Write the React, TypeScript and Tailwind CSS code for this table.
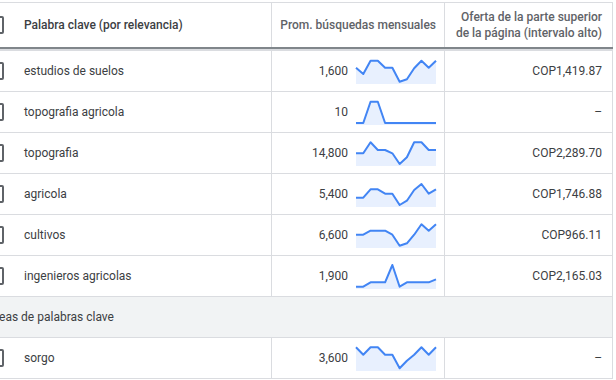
import React from "react";

type Row = { kw: string; vol: string; bid: string; spark: number[] };

const rows: Row[] = [
  { kw: "estudios de suelos", vol: "1,600", bid: "COP1,419.87", spark: [16.7, 23, 9.7, 9.7, 16.7, 16.7, 30.7, 28.3, 17.3, 9.7, 16.7, 9.7] },
  { kw: "topografia agricola", vol: "10", bid: "–", spark: [31, 31, 9.7, 9.7, 31, 31, 31, 31, 31, 31, 31, 31] },
  { kw: "topografia", vol: "14,800", bid: "COP2,289.70", spark: [20.3, 20.3, 9.3, 17, 17, 20.3, 31, 24.3, 9.3, 9.3, 17, 17] },
  { kw: "agricola", vol: "5,400", bid: "COP1,746.88", spark: [23.7, 23.7, 15.3, 15.3, 19.7, 19.7, 31, 26.7, 16, 10, 19.7, 15.3] },
  { kw: "cultivos", vol: "6,600", bid: "COP966.11", spark: [19.7, 19.7, 15.7, 15.7, 15.7, 19.7, 30.7, 28.3, 19.7, 9.3, 15.7, 9.3] },
  { kw: "ingenieros agricolas", vol: "1,900", bid: "COP2,165.03", spark: [30.7, 30.7, 26.3, 26.3, 26.3, 9, 30.7, 26.3, 26.3, 26.3, 26.3, 23.3] },
];

const sorgo: Row = { kw: "sorgo", vol: "3,600", bid: "–", spark: [9.3, 16.7, 9.3, 9.3, 16.7, 16.7, 30.3, 22.7, 16.7, 9.3, 16.7, 9.3] };

function Spark({ data }: { data: number[] }) {
  const step = 80 / (data.length - 1);
  const pts = data.map((v, i) => [i * step, v - 6] as const);
  const line = pts.map(([x, y]) => `${x.toFixed(2)},${y.toFixed(2)}`).join(" ");
  const area = `0,27 ${line} 80,27`;
  return (
    <svg width="80" height="28" viewBox="0 0 80 28" className="shrink-0 overflow-visible">
      <polygon points={area} fill="#e8f0fe" />
      <polyline points={line} fill="none" stroke="#4285f4" strokeWidth="2" strokeLinejoin="round" />
    </svg>
  );
}

function Checkbox() {
  return <div className="h-[18px] w-[18px] shrink-0 rounded-[2px] border-2 border-[#5f6368] bg-white" />;
}

function DataRow({ r }: { r: Row }) {
  return (
    <div className="grid h-[41px] grid-cols-[292px_173px_168px] border-b border-[#dadce0]">
      <div className="flex items-center gap-[20px] border-r border-[#dadce0] pl-[6px]">
        <Checkbox />
        <span>{r.kw}</span>
      </div>
      <div className="flex items-center justify-end gap-[8px] border-r border-[#dadce0] pr-[8px]">
        <span>{r.vol}</span>
        <Spark data={r.spark} />
      </div>
      <div className="flex items-center justify-end border-r border-[#dadce0] pr-[10px]">
        <span>{r.bid}</span>
      </div>
    </div>
  );
}

export default function App() {
  return (
    <div
      className="h-[380px] w-[616px] overflow-hidden bg-white text-[12px] text-[#3c4043]"
      style={{ fontFamily: "Roboto, 'Liberation Sans', sans-serif" }}
    >
      <div className="-ml-[20px] mt-[2px] w-[633px]">
        {/* header */}
        <div className="border-t border-[#dadce0]">
          <div className="grid h-[44px] grid-cols-[292px_173px_168px] font-medium">
            <div className="flex items-center gap-[20px] border-r border-[#dadce0] pl-[6px] text-[#3c4043]">
              <Checkbox />
              <span>Palabra clave (por relevancia)</span>
            </div>
            <div className="flex items-center justify-end border-r border-[#dadce0] pr-[8px] text-[#5f6368]">
              <span>Prom. búsquedas mensuales</span>
            </div>
            <div className="flex items-center justify-end border-r border-[#dadce0] pr-[10px] text-right leading-[16px] text-[#5f6368]">
              <span>
                Oferta de la parte superior
                <br />
                de la página (intervalo alto)
              </span>
            </div>
          </div>
          <div className="h-[2px] bg-[#80868b]" />
          <div className="h-[2px] bg-[#dadce0]" />
        </div>
        {rows.map((r) => (
          <DataRow key={r.kw} r={r} />
        ))}
        <div className="flex h-[41px] items-center border-b border-r border-[#dadce0] bg-[#f1f3f4] pl-[9px]">
          <span>Ideas de palabras clave</span>
        </div>
        <DataRow r={sorgo} />
      </div>
    </div>
  );
}
